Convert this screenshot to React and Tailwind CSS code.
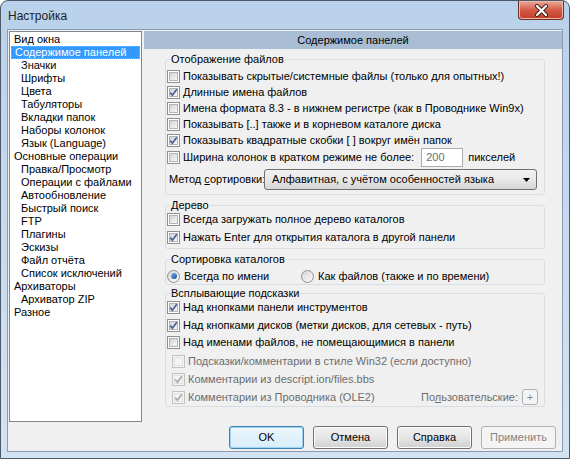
import React from "react";

const tree = [
  { t: "Вид окна", l: 0 },
  { t: "Содержимое панелей", l: 0, sel: true },
  { t: "Значки", l: 1 },
  { t: "Шрифты", l: 1 },
  { t: "Цвета", l: 1 },
  { t: "Табуляторы", l: 1 },
  { t: "Вкладки папок", l: 1 },
  { t: "Наборы колонок", l: 1 },
  { t: "Язык (Language)", l: 1 },
  { t: "Основные операции", l: 0 },
  { t: "Правка/Просмотр", l: 1 },
  { t: "Операции с файлами", l: 1 },
  { t: "Автообновление", l: 1 },
  { t: "Быстрый поиск", l: 1 },
  { t: "FTP", l: 1 },
  { t: "Плагины", l: 1 },
  { t: "Эскизы", l: 1 },
  { t: "Файл отчёта", l: 1 },
  { t: "Список исключений", l: 1 },
  { t: "Архиваторы", l: 0 },
  { t: "Архиватор ZIP", l: 1 },
  { t: "Разное", l: 0 },
];

function Check({ checked, disabled }) {
  return (
    <span
      className={`relative flex h-[13px] w-[13px] shrink-0 items-center justify-center border ${
        disabled ? "border-[#c2c2c2] bg-[#f4f4f4]" : "border-[#8e8f8f] bg-white"
      }`}
    >
      <span
        className={`h-[9px] w-[9px] border ${
          disabled
            ? "border-[#e0e0e0] bg-[#f4f4f4]"
            : "border-[#b0b4b8] bg-linear-to-br from-[#d2d2d2] to-[#f8f8f8]"
        }`}
      />
      {checked && (
        <svg className="absolute left-0 top-0" width="11" height="11" viewBox="0 0 11 11">
          <path
            d="M2.2 5.6 L4.4 8.2 L8.8 2.2"
            fill="none"
            stroke={disabled ? "#a8a8a8" : "#4a5d9a"}
            strokeWidth="1.7"
          />
        </svg>
      )}
    </span>
  );
}

function Radio({ on }) {
  return (
    <span className="flex h-[13px] w-[13px] shrink-0 items-center justify-center rounded-full border border-[#8e8f8f] bg-linear-to-br from-[#d8d8d8] to-[#fafafa]">
      {on && <span className="h-[6px] w-[6px] rounded-full bg-linear-to-br from-[#7ab8ee] to-[#0d4f94]" />}
    </span>
  );
}

function Row({ checked, disabled, children, className = "" }) {
  return (
    <div className={`flex items-center gap-[3px] ${disabled ? "text-[#6d6d6d]" : ""} ${className || "h-[16px]"}`}>
      <Check checked={checked} disabled={disabled} />
      <span className="whitespace-nowrap">{children}</span>
    </div>
  );
}

function Group({ title, children, className = "" }) {
  return (
    <fieldset className={`flex flex-col rounded-[3px] border border-[#d5dfe5] pl-[1px] ${className}`}>
      <legend className="ml-[3px] px-[1px] leading-[14px]">{title}</legend>
      {children}
    </fieldset>
  );
}

function Btn({ children, def, disabled }) {
  return (
    <button
      className={`flex h-[23px] w-[75px] items-center justify-center rounded-[3px] border font-normal leading-none ${
        disabled
          ? "border-[#adb2b5] bg-[#f4f4f4] text-[#838383]"
          : def
          ? "border-[#3c7fb1] bg-linear-to-b from-[#eaf6fd] to-[#d9eefa] shadow-[inset_0_0_0_1px_#9fd3f3]"
          : "border-[#707070] bg-linear-to-b from-[#f2f2f2] via-[#e6e6e6] to-[#d0d0d0] shadow-[inset_0_0_0_1px_#fcfcfc]"
      }`}
    >
      {children}
    </button>
  );
}

export default function App() {
  return (
    <div className="h-[459px] w-[570px] overflow-hidden bg-white text-[11px] text-black [font-family:'Liberation_Sans',Arial,sans-serif]">
      <div className="flex h-full w-full flex-col rounded-t-[8px] border border-[#4d5968] bg-linear-to-b from-[#b9d1ea] via-[#c7daee] to-[#d3e3f3]">
        {/* title bar */}
        <div className="flex h-[28px] shrink-0 items-start justify-between pl-[7px]">
          <span className="mt-[8px] text-[12px] leading-[14px] text-[#1e1e1e]">Настройка</span>
          <div className="mr-[5px] flex h-[19px] w-[46px] items-center justify-center rounded-b-[4px] border border-t-0 border-[#6b2f2a] bg-linear-to-b from-[#e9a99c] via-[#d25b45] to-[#c33d24] shadow-[inset_0_0_0_1px_#f0b7aa]">
            <svg width="15" height="13" viewBox="0 0 15 13">
              <path d="M3 2 L12 11 M12 2 L3 11" stroke="#3a1e1c" strokeWidth="4" strokeLinecap="round" />
              <path d="M3 2 L12 11 M12 2 L3 11" stroke="#ffffff" strokeWidth="2.2" strokeLinecap="round" />
            </svg>
          </div>
        </div>

        {/* client */}
        <div className="mx-[6px] flex h-[423px] flex-col border border-[#8b9bb0] bg-[#f0f0f0]">
          <div className="flex h-[392px] gap-[2px] pl-[1px] pt-[1px]">
            {/* tree */}
            <div className="h-[391px] w-[133px] shrink-0 border border-[#828790] bg-white pt-[1px] leading-[13px]">
              {tree.map((it) => (
                <div key={it.t} className="h-[13px] px-[1px]">
                  <div
                    className={`h-[13px] whitespace-nowrap ${it.l ? "pl-[10px]" : "pl-[3px]"} ${
                      it.sel ? "border border-dotted border-[#d8b060] bg-[#3399ff] pl-[2px] leading-[11px] text-white" : ""
                    }`}
                  >
                    {it.t}
                  </div>
                </div>
              ))}
            </div>

            {/* right pane */}
            <div className="flex flex-1 flex-col">
              <div className="flex h-[18px] items-center justify-center bg-[#a9bdd5]">Содержимое панелей</div>

              <div className="flex flex-col pl-[21px] pr-[17px] pt-[3px]">
                <Group title="Отображение файлов" className="pb-[4px]">
                  <Row className="mt-[2px] h-[16px]">Показывать скрытые/системные файлы (только для опытных!)</Row>
                  <Row checked>Длинные имена файлов</Row>
                  <Row>Имена формата 8.3 - в нижнем регистре (как в Проводнике Win9x)</Row>
                  <Row>Показывать [..] также и в корневом каталоге диска</Row>
                  <Row checked>Показывать квадратные скобки [ ] вокруг имён папок</Row>
                  <div className="flex h-[18px] items-center gap-[3px]">
                    <Check />
                    <span className="whitespace-nowrap">Ширина колонок в кратком режиме не более:</span>
                    <span className="ml-[4px] flex h-[19px] w-[42px] items-center border border-[#abadb3] bg-white pl-[4px] text-[#6d6d6d]">
                      200
                    </span>
                    <span className="ml-[2px]">пикселей</span>
                  </div>
                  <div className="mt-[3px] flex h-[21px] items-center">
                    <span className="w-[97px] shrink-0 whitespace-nowrap pl-[2px]">
                      Метод <span className="underline">с</span>ортировки:
                    </span>
                    <div className="flex h-[21px] w-[273px] shrink-0 items-center justify-between rounded-[3px] border border-[#707070] bg-linear-to-b from-[#f2f2f2] via-[#e8e8e8] to-[#d6d6d6] pl-[7px] pr-[6px]">
                      <span>Алфавитная, с учётом особенностей языка</span>
                      <svg width="7" height="4" viewBox="0 0 7 4">
                        <path d="M0 0 H7 L3.5 4 Z" fill="#000" />
                      </svg>
                    </div>
                  </div>
                </Group>

                <Group title="Дерево" className="mt-[3px] pb-[3px]">
                  <Row className="-mt-[1px] h-[16px]">Всегда загружать полное дерево каталогов</Row>
                  <Row checked className="mt-[2px] h-[16px]">Нажать Enter для открытия каталога в другой панели</Row>
                </Group>

                <Group title="Сортировка каталогов" className="mt-[3px]">
                  <div className="mt-[2px] flex h-[16px] items-center">
                    <Radio on />
                    <span className="ml-[4px] w-[117px]">Всегда по имени</span>
                    <Radio />
                    <span className="ml-[4px]">Как файлов (также и по времени)</span>
                  </div>
                </Group>

                <Group title="Всплывающие подсказки" className="mt-[1px]">
                  <Row checked className="-mt-[1px] h-[16px]">Над кнопками панели инструментов</Row>
                  <Row checked className="mt-[2px] h-[16px]">Над кнопками дисков (метки дисков, для сетевых - путь)</Row>
                  <Row className="mt-[1px] h-[16px]">Над именами файлов, не помещающимися в панели</Row>
                  <Row disabled className="mt-[2px] h-[18px] pl-[5px]">Подсказки/комментарии в стиле Win32 (если доступно)</Row>
                  <Row disabled checked className="h-[18px] pl-[5px]">Комментарии из descript.ion/files.bbs</Row>
                  <div className="flex h-[18px] items-center pr-[6px]">
                    <Row disabled checked className="h-[18px] pl-[5px]">Комментарии из Проводника (OLE2)</Row>
                    <span className="ml-auto text-[#6d6d6d]">
                      По<span className="underline">л</span>ьзовательские:
                    </span>
                    <span className="ml-[4px] flex h-[16px] w-[16px] items-center justify-center rounded-[3px] border border-[#adb2b5] bg-[#f4f4f4] text-[11px] text-[#8a8a8a]">
                      +
                    </span>
                  </div>
                </Group>
              </div>
            </div>
          </div>

          {/* buttons */}
          <div className="mt-[4px] flex justify-end gap-[9px] pr-[6px]">
            <Btn def>OK</Btn>
            <Btn>Отмена</Btn>
            <Btn>Справка</Btn>
            <Btn disabled>Применить</Btn>
          </div>
        </div>
      </div>
    </div>
  );
}
